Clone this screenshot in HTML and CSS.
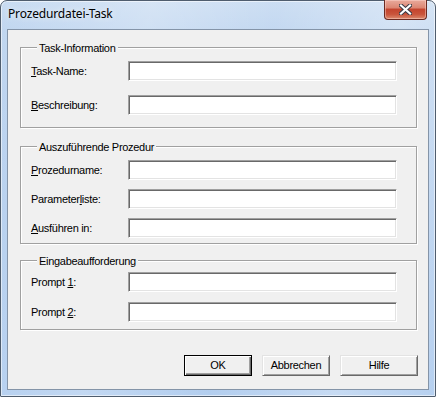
FILE: index.html
```html
<!DOCTYPE html>
<html>
<head>
<meta charset="utf-8">
<link rel="stylesheet" href="styles.css">
</head>
<body>
<div class="window">
  <div class="titlebar">
    <span class="title">Prozedurdatei-Task</span>
    <div class="close">
      <svg width="13" height="11" viewBox="0 0 13 11">
        <path d="M2 1.5 L11 9.5 M11 1.5 L2 9.5" stroke="#3a3a44" stroke-width="4.2" stroke-linecap="square" fill="none"/>
        <path d="M2 1.5 L11 9.5 M11 1.5 L2 9.5" stroke="#ffffff" stroke-width="2.2" stroke-linecap="square" fill="none"/>
      </svg>
    </div>
  </div>
  <div class="client">
    <div class="group g1">
      <div class="legend">Task-Information</div>
      <div class="row"><span class="label"><u>T</u>ask-Name:</span><div class="input"></div></div>
      <div class="row"><span class="label"><u>B</u>eschreibung:</span><div class="input"></div></div>
    </div>
    <div class="group g2">
      <div class="legend">Auszuführende Prozedur</div>
      <div class="row"><span class="label"><u>P</u>rozedurname:</span><div class="input"></div></div>
      <div class="row"><span class="label">Parameter<u>l</u>iste:</span><div class="input"></div></div>
      <div class="row"><span class="label"><u>A</u>usführen in:</span><div class="input"></div></div>
    </div>
    <div class="group g3">
      <div class="legend">Eingabeaufforderung</div>
      <div class="row"><span class="label">Prompt <u>1</u>:</span><div class="input"></div></div>
      <div class="row"><span class="label">Prompt <u>2</u>:</span><div class="input"></div></div>
    </div>
    <div class="buttons">
      <div class="btn default w-ok">OK</div>
      <div class="btn w-ab">Abbrechen</div>
      <div class="btn w-hi">Hilfe</div>
    </div>
  </div>
</div>
</body>
</html>
```
FILE: styles.css
```css
html, body {
  margin: 0;
  padding: 0;
  background: #ffffff;
}
body {
  width: 436px;
  height: 397px;
  overflow: hidden;
}
.window {
  box-sizing: border-box;
  width: 436px;
  height: 397px;
  border: 1px solid #4f5d6e;
  border-radius: 7px 7px 1px 1px;
  padding: 0 6px 6px 6px;
  display: flex;
  flex-direction: column;
  background:
    linear-gradient(100deg, rgba(255,255,255,0.0) 0%, rgba(255,255,255,0.25) 30%, rgba(255,255,255,0.05) 55%, rgba(255,255,255,0.3) 80%, rgba(255,255,255,0.1) 100%),
    linear-gradient(180deg, #c9dcf2 0px, #c0d6f0 30px, #b5cfee 200px, #aecbee 397px);
  box-shadow: inset 0 0 0 1px rgba(255,255,255,0.55);
}
.titlebar {
  height: 28px;
  display: flex;
  align-items: flex-start;
}
.title {
  font-family: "Noto Sans", "Open Sans", sans-serif;
  font-size: 12px;
  line-height: 16px;
  color: #000;
  margin: 5px 0 0 1px;
  text-shadow: 0 0 6px rgba(255,255,255,0.9);
  letter-spacing: -0.15px;
}
.close {
  margin-left: auto;
  margin-right: 2px;
  margin-top: -1px;
  box-sizing: border-box;
  width: 43px;
  height: 20px;
  border: 1px solid #6a2a22;
  border-top: none;
  border-radius: 0 0 4px 4px;
  background: linear-gradient(180deg, #e9aa9c 0%, #dc8774 40%, #c4452f 50%, #c9543b 75%, #dc8a6e 100%);
  box-shadow: inset 0 0 0 1px rgba(255,220,210,0.45);
  display: flex;
  align-items: center;
  justify-content: center;
}
.close svg { display: block; margin-top: -1px; }
.client {
  box-sizing: border-box;
  height: 361px;
  border: 1px solid #8494a8;
  background: #f0f0f0;
  padding: 0 10px 0 12px;
  display: flex;
  flex-direction: column;
  font-family: "Liberation Sans", Arial, sans-serif;
  font-size: 11px;
  color: #000;
}
.group {
  box-sizing: border-box;
  margin-right: 1px;
  border: 1px solid #a0a0a0;
  box-shadow: 1px 1px 0 #ffffff, inset 1px 1px 0 #ffffff;
  padding-left: 10px;
  display: flex;
  flex-direction: column;
}
.legend {
  align-self: flex-start;
  margin: -6px 0 -7px 6px;
  padding: 0 2px;
  line-height: 13px;
  background: #f0f0f0;
  letter-spacing: -0.3px;
}
.g1 { margin-top: 17px; height: 81px; }
.g2 { margin-top: 18px; height: 98px; }
.g3 { margin-top: 16px; height: 70px; }
.g1 .row { margin-top: 14px; }
.g1 .row:nth-child(2) { margin-top: 13px; }
.g2 .row { margin-top: 9px; }
.g2 .row:nth-child(2) { margin-top: 13px; }
.g3 .row { margin-top: 10px; }
.g3 .row:nth-child(2) { margin-top: 11px; }
.row {
  display: flex;
  align-items: center;
  height: 20px;
}
.label {
  width: 97px;
  line-height: 13px;
  letter-spacing: -0.3px;
  white-space: nowrap;
}
.label u { text-underline-offset: 1px; }
.input {
  box-sizing: border-box;
  width: 269px;
  height: 20px;
  background: #ffffff;
  border: 1px solid;
  border-color: #a0a0a0 #ffffff #ffffff #a0a0a0;
  box-shadow: inset 1px 1px 0 #696969, inset -1px -1px 0 #e3e3e3;
}
.buttons {
  margin-top: 25px;
  display: flex;
  justify-content: flex-end;
  gap: 10px;
}
.btn {
  box-sizing: border-box;
  height: 21px;
  background: #f0f0f0;
  border: 1px solid;
  border-color: #e3e3e3 #696969 #696969 #e3e3e3;
  box-shadow: inset 1px 1px 0 #ffffff, inset -1px -1px 0 #a0a0a0;
  display: flex;
  align-items: center;
  justify-content: center;
  line-height: 13px;
  letter-spacing: -0.3px;
}
.btn.default {
  border-color: #000000;
  box-shadow: inset 1px 1px 0 #ffffff, inset -1px -1px 0 #696969, inset -2px -2px 0 #a0a0a0;
}
.w-ok { width: 68px; }
.w-ab { width: 68px; }
.w-hi { width: 78px; }
```
